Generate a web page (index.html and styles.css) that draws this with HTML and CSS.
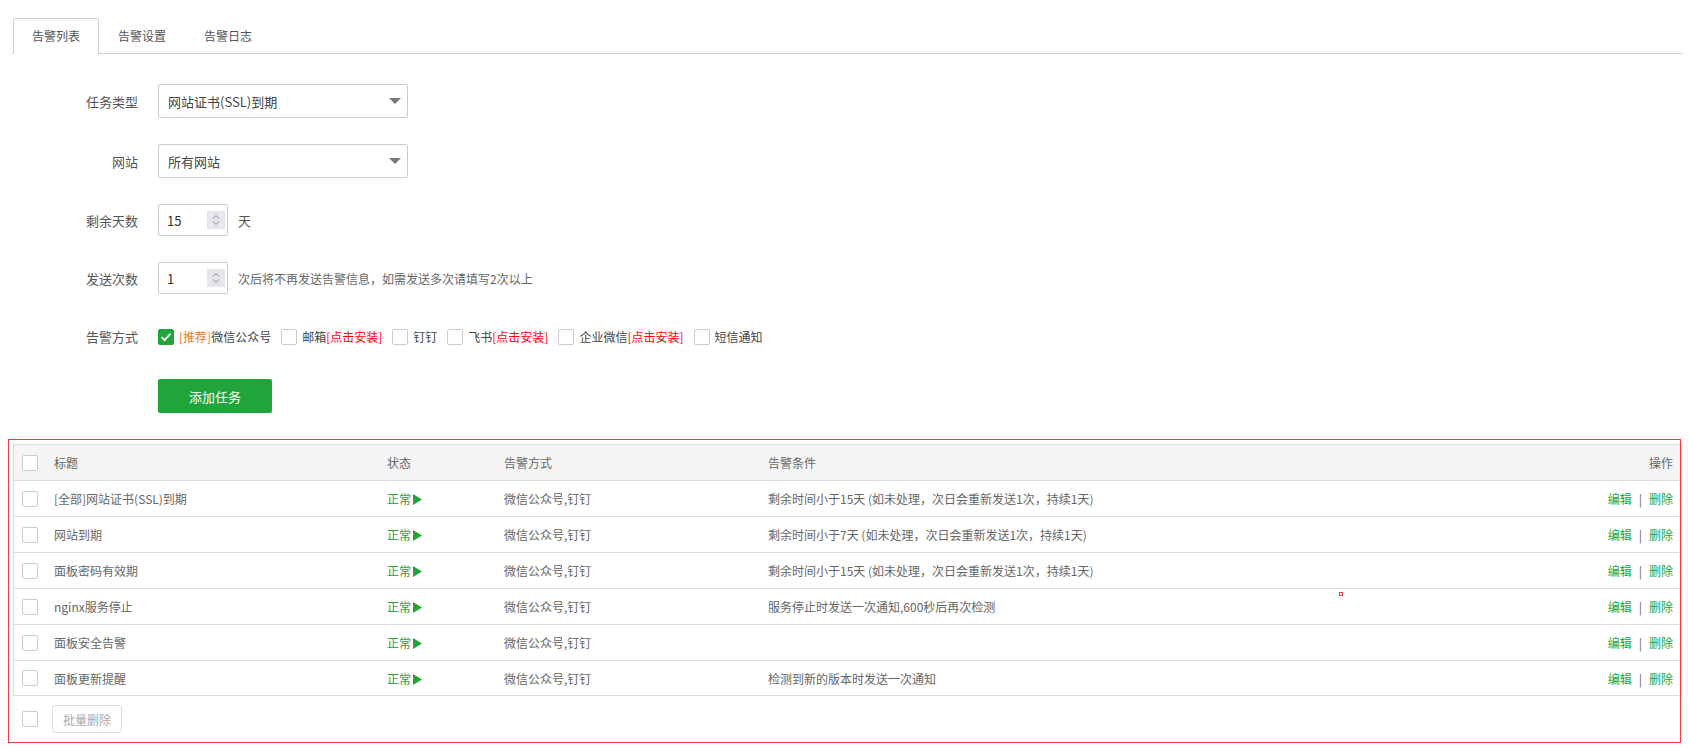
FILE: index.html
```html
<!DOCTYPE html>
<html lang="zh-CN">
<head>
<meta charset="utf-8">
<title>告警</title>
<link rel="stylesheet" href="styles.css">
</head>
<body>
<div class="page">
  <div class="tabs">
    <div class="tab active">告警列表</div>
    <div class="tab">告警设置</div>
    <div class="tab">告警日志</div>
  </div>

  <div class="form">
    <div class="form-row row-select">
      <div class="label">任务类型</div>
      <div class="select"><span>网站证书(SSL)到期</span><i class="caret"></i></div>
    </div>
    <div class="form-row row-select">
      <div class="label">网站</div>
      <div class="select"><span>所有网站</span><i class="caret"></i></div>
    </div>
    <div class="form-row row-input">
      <div class="label">剩余天数</div>
      <div class="num"><span>15</span>
        <svg class="spin" width="18" height="18" viewBox="0 0 18 18"><rect width="18" height="18" fill="#e6e6ec"/><path d="M6 7.5 L9 4.5 L12 7.5" fill="none" stroke="#8a8a92" stroke-width="1"/><path d="M6 10.5 L9 13.5 L12 10.5" fill="none" stroke="#8a8a92" stroke-width="1"/></svg>
      </div>
      <span class="unit">天</span>
    </div>
    <div class="form-row row-input">
      <div class="label">发送次数</div>
      <div class="num"><span>1</span>
        <svg class="spin" width="18" height="18" viewBox="0 0 18 18"><rect width="18" height="18" fill="#e6e6ec"/><path d="M6 7.5 L9 4.5 L12 7.5" fill="none" stroke="#8a8a92" stroke-width="1"/><path d="M6 10.5 L9 13.5 L12 10.5" fill="none" stroke="#8a8a92" stroke-width="1"/></svg>
      </div>
      <span class="hint">次后将不再发送告警信息，如需发送多次请填写2次以上</span>
    </div>
    <div class="form-row row-check">
      <div class="label">告警方式</div>
      <div class="checks">
        <label class="ck"><span class="box checked"><svg width="16" height="16" viewBox="0 0 16 16"><path d="M3.5 8.2 L6.6 11.2 L12.5 4.6" fill="none" stroke="#fff" stroke-width="1.8"/></svg></span><span class="rec">[推荐]</span>微信公众号</label>
        <label class="ck"><span class="box"></span>邮箱<span class="inst">[点击安装]</span></label>
        <label class="ck"><span class="box"></span>钉钉</label>
        <label class="ck"><span class="box"></span>飞书<span class="inst">[点击安装]</span></label>
        <label class="ck"><span class="box"></span>企业微信<span class="inst">[点击安装]</span></label>
        <label class="ck"><span class="box"></span>短信通知</label>
      </div>
    </div>
    <div class="form-row row-btn">
      <div class="label"></div>
      <button class="btn-add">添加任务</button>
    </div>
  </div>

  <div class="list">
    <table class="tbl">
      <colgroup>
        <col class="c-ck"><col class="c-title"><col class="c-status"><col class="c-way"><col class="c-cond"><col class="c-op">
      </colgroup>
      <thead>
        <tr><th><span class="box"></span></th><th>标题</th><th>状态</th><th>告警方式</th><th>告警条件</th><th class="op">操作</th></tr>
      </thead>
      <tbody>
        <tr><td><span class="box"></span></td><td>[全部]网站证书(SSL)到期</td><td><span class="ok">正常</span><svg class="play" width="9" height="11" viewBox="0 0 9 11"><polygon points="0,0 9,5.5 0,11" fill="#20a53a"/></svg></td><td>微信公众号,钉钉</td><td>剩余时间小于15天 (如未处理，次日会重新发送1次，持续1天)</td><td class="op"><a>编辑</a><span class="sep">|</span><a>删除</a></td></tr>
        <tr><td><span class="box"></span></td><td>网站到期</td><td><span class="ok">正常</span><svg class="play" width="9" height="11" viewBox="0 0 9 11"><polygon points="0,0 9,5.5 0,11" fill="#20a53a"/></svg></td><td>微信公众号,钉钉</td><td>剩余时间小于7天 (如未处理，次日会重新发送1次，持续1天)</td><td class="op"><a>编辑</a><span class="sep">|</span><a>删除</a></td></tr>
        <tr><td><span class="box"></span></td><td>面板密码有效期</td><td><span class="ok">正常</span><svg class="play" width="9" height="11" viewBox="0 0 9 11"><polygon points="0,0 9,5.5 0,11" fill="#20a53a"/></svg></td><td>微信公众号,钉钉</td><td>剩余时间小于15天 (如未处理，次日会重新发送1次，持续1天)</td><td class="op"><a>编辑</a><span class="sep">|</span><a>删除</a></td></tr>
        <tr><td><span class="box"></span></td><td>nginx服务停止</td><td><span class="ok">正常</span><svg class="play" width="9" height="11" viewBox="0 0 9 11"><polygon points="0,0 9,5.5 0,11" fill="#20a53a"/></svg></td><td>微信公众号,钉钉</td><td>服务停止时发送一次通知,600秒后再次检测</td><td class="op"><a>编辑</a><span class="sep">|</span><a>删除</a></td></tr>
        <tr><td><span class="box"></span></td><td>面板安全告警</td><td><span class="ok">正常</span><svg class="play" width="9" height="11" viewBox="0 0 9 11"><polygon points="0,0 9,5.5 0,11" fill="#20a53a"/></svg></td><td>微信公众号,钉钉</td><td></td><td class="op"><a>编辑</a><span class="sep">|</span><a>删除</a></td></tr>
        <tr><td><span class="box"></span></td><td>面板更新提醒</td><td><span class="ok">正常</span><svg class="play" width="9" height="11" viewBox="0 0 9 11"><polygon points="0,0 9,5.5 0,11" fill="#20a53a"/></svg></td><td>微信公众号,钉钉</td><td>检测到新的版本时发送一次通知</td><td class="op"><a>编辑</a><span class="sep">|</span><a>删除</a></td></tr>
      </tbody>
    </table>
    <div class="batch">
      <span class="box"></span>
      <button class="btn-batch">批量删除</button>
    </div>
  </div>

  <div class="mark-box"></div>
  <div class="mark-dot"></div>
</div>
</body>
</html>
```

FILE: styles.css
```css
* { box-sizing: border-box; }
html, body { margin: 0; padding: 0; background: #fff; }
body {
  font-family: "Noto Sans CJK SC", "Noto Sans", sans-serif;
  color: #555;
  width: 1689px;
  height: 748px;
  overflow: hidden;
}
.page { position: relative; padding-top: 18px; height: 748px; }

/* tabs */
.tabs {
  display: flex;
  margin: 0 6px 0 12px;
  padding-left: 1px;
  border-bottom: 1px solid #d2d0da;
  height: 36px;
}
.tab {
  height: 36px;
  padding: 0 18px;
  border: 1px solid transparent;
  border-bottom: none;
  font-size: 12px;
  line-height: 34px;
  color: #555;
}
.tab.active {
  border-color: #d2d0da;
  border-radius: 2px 2px 0 0;
  background: #fff;
  height: 36px;
  margin-bottom: -1px;
}

/* form */
.form {
  margin-top: 30px;
  display: flex;
  flex-direction: column;
  gap: 26px;
}
.form-row { display: flex; align-items: center; }
.row-select { height: 34px; }
.row-input { height: 32px; }
.row-check { height: 33px; }
.row-btn { height: 34px; }
.label {
  width: 138px;
  margin-right: 20px;
  text-align: right;
  font-size: 13px;
  color: #555;
  flex: none;
}
.select {
  width: 250px;
  height: 34px;
  border: 1px solid #ccc;
  border-radius: 2px;
  display: flex;
  align-items: center;
  justify-content: space-between;
  padding: 0 6px 0 9px;
  font-size: 13px;
  color: #444;
}
.caret {
  width: 0; height: 0;
  border-left: 6px solid transparent;
  border-right: 6px solid transparent;
  border-top: 6px solid #777;
}
.num {
  width: 70px;
  height: 32px;
  border: 1px solid #ccc;
  border-radius: 2px;
  display: flex;
  align-items: center;
  justify-content: space-between;
  padding: 0 1px 0 8px;
  font-size: 13px;
  color: #333;
}
.spin { display: block; margin-right: 1px; }
.unit { margin-left: 10px; font-size: 13px; color: #555; }
.hint { margin-left: 10px; font-size: 12px; color: #666; }

.checks { display: flex; align-items: center; }
.ck {
  display: flex;
  align-items: center;
  font-size: 12px;
  color: #444;
  margin-right: 10px;
}
.box {
  display: inline-block;
  width: 16px;
  height: 16px;
  border: 1px solid #ccc;
  border-radius: 2px;
  background: #fff;
  flex: none;
  vertical-align: middle;
}
.ck .box { margin-right: 5px; }
.box.checked { background: #20a53a; border-color: #20a53a; position: relative; }
.box.checked svg { position: absolute; left: -1px; top: -1px; }
.rec { color: #f6792a; }
.inst { color: #f00; }

.btn-add {
  width: 114px;
  height: 34px;
  border: none;
  border-radius: 2px;
  background: #20a53a;
  color: #fff;
  font-family: inherit;
  font-size: 13px;
  padding: 0;
}

/* table */
.list { margin: 31px 7px 0 13px; }
.tbl {
  width: 100%;
  table-layout: fixed;
  border-collapse: separate;
  border-spacing: 0;
  border: 1px solid #ddd;
  font-size: 12px;
  color: #666;
}
.c-ck { width: 32px; }
.c-title { width: 333px; }
.c-status { width: 117px; }
.c-way { width: 264px; }
.c-op { width: 140px; }
.tbl th, .tbl td {
  padding: 0 8px;
  text-align: left;
  font-weight: normal;
  vertical-align: middle;
  white-space: nowrap;
}
.tbl th { background: #f5f5f5; color: #666; height: 35px; }
.tbl td { border-top: 1px solid #ddd; height: 36px; }
.tbl tr:last-child td { height: 35px; }
.tbl .op { text-align: right; }
.tbl td .box, .tbl th .box { display: block; }
.ok { color: #20a53a; }
.play { vertical-align: -1px; margin-left: 2px; }
.op a { color: #20a53a; text-decoration: none; }
.sep { color: #666; margin: 0 7px; }

.batch {
  display: flex;
  align-items: center;
  margin-top: 9px;
  padding-left: 9px;
}
.btn-batch {
  margin-left: 14px;
  width: 70px;
  height: 28px;
  border: 1px solid #ddd;
  border-radius: 3px;
  background: #fff;
  color: #aaa;
  font-family: inherit;
  font-size: 12px;
  padding: 0;
}

/* annotation overlays */
.mark-box {
  position: absolute;
  left: 8px;
  top: 439px;
  width: 1673px;
  height: 304px;
  border: 1px solid #f43b3b;
  pointer-events: none;
}
.mark-dot {
  position: absolute;
  left: 1339px;
  top: 592px;
  width: 4px;
  height: 4px;
  border: 1px solid #f43b3b;
}
```
